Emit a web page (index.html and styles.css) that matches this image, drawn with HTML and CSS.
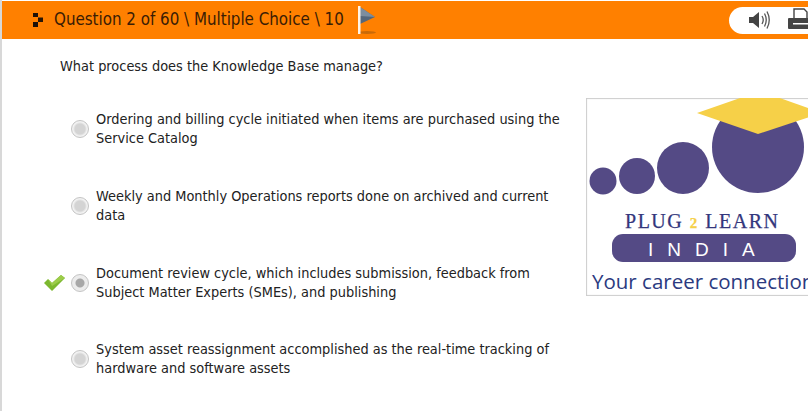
FILE: index.html
```html
<!DOCTYPE html>
<html>
<head>
  <title>Question 2 of 60</title>
  <link rel="stylesheet" href="styles.css">
</head>
<body>
  <div class="page">
    <header class="topbar">
      <svg class="bullet" width="14" height="16" viewBox="0 0 14 16">
        <rect x="1" y="1" width="5" height="4" fill="#1c1008"/>
        <rect x="6" y="5.5" width="5" height="4.5" fill="#2a1606"/>
        <rect x="1" y="10" width="5" height="5" fill="#1c1008"/>
      </svg>
      <span class="title">Question 2 of 60 \ Multiple Choice \ 10</span>
      <svg class="flag" width="20" height="30" viewBox="0 0 20 30">
        <ellipse cx="10" cy="27.5" rx="9" ry="1.5" fill="#c96a08"/>
        <path d="M3 2 L18 12 L3 19 Z" fill="#55677a"/>
        <path d="M3 2 L18 12 L3 11 Z" fill="#7d8e9e"/>
        <rect x="1" y="1" width="2.5" height="28" fill="#fff4e6"/>
      </svg>
      <div class="tools">
        <svg width="24" height="22" viewBox="0 0 24 22">
          <path d="M1 8 H5 L11 3 V19 L5 14 H1 Z" fill="#444"/>
          <path d="M14 7 Q16.5 11 14 15 M16.5 4.5 Q20 11 16.5 17.5 M19 2.5 Q23.5 11 19 19.5" fill="none" stroke="#555" stroke-width="1.3"/>
        </svg>
        <svg width="26" height="24" viewBox="0 0 26 24">
          <path d="M7 1 H17 L20 4 V11 H7 Z" fill="#fff" stroke="#444" stroke-width="1.4"/>
          <rect x="1" y="10" width="25" height="11" rx="1" fill="#444"/>
          <rect x="6" y="15" width="15" height="1.5" fill="#fff"/>
          <rect x="22" y="12" width="2" height="2" fill="#ddd"/>
        </svg>
      </div>
    </header>

    <main class="content">
      <section class="quiz">
        <p class="prompt">What process does the Knowledge Base manage?</p>
        <ul class="options">
          <li class="option">
            <span class="mark"></span>
            <span class="radio"></span>
            <span class="label">Ordering and billing cycle initiated when items are purchased using the Service Catalog</span>
          </li>
          <li class="option">
            <span class="mark"></span>
            <span class="radio"></span>
            <span class="label">Weekly and Monthly Operations reports done on archived and current data</span>
          </li>
          <li class="option">
            <span class="mark">
              <svg width="21" height="16" viewBox="0 0 21 16">
                <path d="M0 8 L4 4 L8 8 L17 0 L21 3 L8 16 Z" fill="#7cb82f"/>
                <path d="M4 4 L8 8 L17 0 L21 3 L8 11 Z" fill="#9ccc4a"/>
              </svg>
            </span>
            <span class="radio checked"></span>
            <span class="label">Document review cycle, which includes submission, feedback from Subject Matter Experts (SMEs), and publishing</span>
          </li>
          <li class="option">
            <span class="mark"></span>
            <span class="radio"></span>
            <span class="label">System asset reassignment accomplished as the real-time tracking of hardware and software assets</span>
          </li>
        </ul>
      </section>

      <aside class="logo">
        <svg width="226" height="198" viewBox="0 0 226 198">
          <circle cx="17" cy="83" r="13.5" fill="#544a85"/>
          <circle cx="51" cy="78" r="18" fill="#544a85"/>
          <circle cx="97" cy="70" r="26" fill="#544a85"/>
          <circle cx="172" cy="49" r="46" fill="#544a85"/>
          <path d="M111 15 L157 -1 H191 L236 15 L172 36 Z" fill="#f6d048"/>
          <text class="logo-name" x="39" y="130" textLength="153">PLUG <tspan class="logo-two">2</tspan> LEARN</text>
          <rect x="26" y="136" width="184" height="28" rx="11" fill="#544a85"/>
          <text class="logo-india" x="62" y="158">INDIA</text>
          <text class="logo-tag" x="6" y="191">Your career connection</text>
        </svg>
      </aside>
    </main>
  </div>
</body>
</html>
```

FILE: styles.css
```css
html, body {
  margin: 0;
  height: 100%;
  overflow: hidden;
  background: #fff;
}

body {
  font-family: "DejaVu Sans Condensed", "DejaVu Sans", sans-serif;
  font-size: 14.4px;
  color: #222;
}

.page {
  width: 808px;
  height: 411px;
  overflow: hidden;
  border-left: 2px solid #d8d8d8;
  box-sizing: border-box;
}

.topbar {
  display: flex;
  align-items: center;
  height: 38px;
  margin-top: 1px;
  padding-left: 30px;
  background: #ff8000;
}

.bullet {
  margin-right: 8px;
}

.title {
  padding-bottom: 2px;
  font-size: 16.8px;
  color: #3a1c05;
}

.flag {
  margin-left: 13px;
}

.tools {
  display: flex;
  align-items: center;
  gap: 15px;
  margin-left: auto;
  margin-right: -40px;
  width: 119px;
  height: 27px;
  padding-left: 19px;
  box-sizing: border-box;
  background: #fff;
  border-radius: 14px 0 0 14px;
}

.content {
  display: flex;
  justify-content: space-between;
  align-items: flex-start;
}

.quiz {
  width: 530px;
  padding-left: 58px;
}

.prompt {
  margin: 18px 0 34.3px;
  line-height: 19px;
}

.options {
  margin: 0;
  padding: 0;
  list-style: none;
}

.option {
  display: flex;
  align-items: center;
  height: 38px;
  margin-bottom: 38.67px;
  margin-left: -16px;
}

.mark {
  display: flex;
  width: 27px;
  height: 16px;
  flex: none;
}

.radio {
  flex: none;
  width: 16px;
  height: 16px;
  margin-right: 7px;
  border: 1px solid #c4c4c4;
  border-radius: 50%;
  background: radial-gradient(circle, #d4d4d4 0 5px, #f2f2f2 7px);
}

.radio.checked {
  background: radial-gradient(circle, #a8a8a8 0 4px, #ececec 5px);
}

.label {
  width: 470px;
  line-height: 19px;
}

.logo {
  flex: none;
  margin-top: 59px;
  margin-right: -4px;
  width: 226px;
  height: 198px;
  box-shadow: inset 1px 1px 1px #ccc, inset 0 -1px 1px #ccc;
}

.logo-name {
  font-family: "Liberation Serif", serif;
  font-size: 20px;
  fill: #33367c;
  stroke: #33367c;
  stroke-width: 0.25px;
}

.logo-two {
  fill: #f6d048;
  stroke: #f6d048;
  font-weight: bold;
  font-size: 15px;
}

.logo-india {
  font-family: "Liberation Sans", sans-serif;
  font-size: 19px;
  letter-spacing: 14px;
  fill: #fff;
}

.logo-tag {
  font-family: "Open Sans", sans-serif;
  font-size: 20.5px;
  fill: #2b3a80;
}
```
